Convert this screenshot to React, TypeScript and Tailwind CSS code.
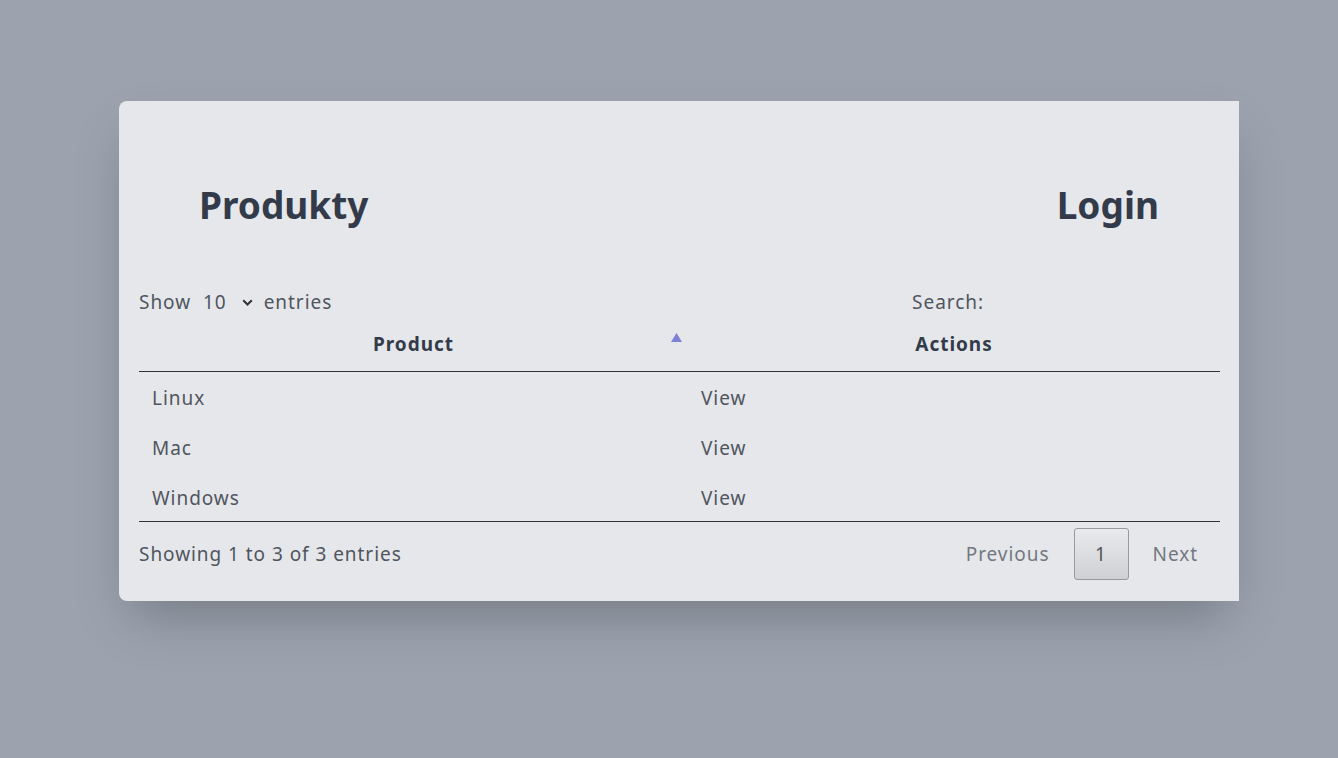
import React from "react";

const rows = ["Linux", "Mac", "Windows"];

export default function App() {
  return (
    <div
      className="min-h-screen w-full bg-[#9ca3af] pt-[101px] pl-[119px]"
      style={{ fontFamily: '"Noto Sans", "Open Sans", sans-serif' }}
    >
      <div className="w-[1120px] h-[500px] rounded-l-lg bg-[#e5e7eb] shadow-2xl flex flex-col">
        <div className="flex items-center justify-between px-20 pt-[79px] pb-[58px]">
          <h1 className="text-[37px] leading-[50px] font-bold text-[#333b4a]">Produkty</h1>
          <h1 className="text-[37px] leading-[50px] font-bold text-[#333b4a]">Login</h1>
        </div>
        <div className="pl-5 pr-[19px] text-[19px] tracking-wider text-[#50555e]">
          <div className="flex items-center justify-between h-[28px]">
            <div className="flex items-center">
              <span>Show</span>
              <span className="flex items-center ml-[12px]">
                <span>10</span>
                <svg className="ml-[15px]" width="11" height="7" viewBox="0 0 11 7" fill="none">
                  <path d="M1.2 1.2 L5.5 5.5 L9.8 1.2" stroke="#333" strokeWidth="2" />
                </svg>
              </span>
              <span className="ml-[11px]">entries</span>
            </div>
            <div className="flex items-center">
              <span>Search:</span>
              <input
                className="ml-1 w-[232px] bg-transparent outline-none border-0"
                aria-label="Search"
              />
            </div>
          </div>
          <table className="w-full border-collapse">
            <thead>
              <tr className="border-b border-[#333]">
                <th className="relative w-[549px] h-[55px] pt-[2px] font-bold text-[#333b4a] text-center">
                  Product
                  <svg
                    className="absolute right-[6px] top-[17px]"
                    width="11"
                    height="9"
                    viewBox="0 0 11 9"
                  >
                    <path d="M5.5 0 L11 9 L0 9 Z" fill="#7f7fd5" />
                  </svg>
                </th>
                <th className="h-[55px] pt-[2px] font-bold text-[#333b4a] text-center">Actions</th>
              </tr>
            </thead>
            <tbody className="border-b border-[#333]">
              {rows.map((r) => (
                <tr key={r} className="h-[50px]">
                  <td className="pl-[13px] pt-[4px]">{r}</td>
                  <td className="pl-[13px] pt-[4px]">View</td>
                </tr>
              ))}
            </tbody>
          </table>
          <div className="flex items-center justify-between h-[63px] pt-[2px]">
            <span>Showing 1 to 3 of 3 entries</span>
            <div className="flex items-center mr-[10px]">
              <span className="px-3 text-[#737880]">Previous</span>
              <span className="ml-3 w-[55px] h-[52px] flex items-center justify-center rounded-[3px] border border-[#9a9a9a] bg-gradient-to-b from-[#e9eaed] to-[#cfd0d4] text-[#555]">
                1
              </span>
              <span className="ml-3 px-3 text-[#737880]">Next</span>
            </div>
          </div>
        </div>
      </div>
    </div>
  );
}
